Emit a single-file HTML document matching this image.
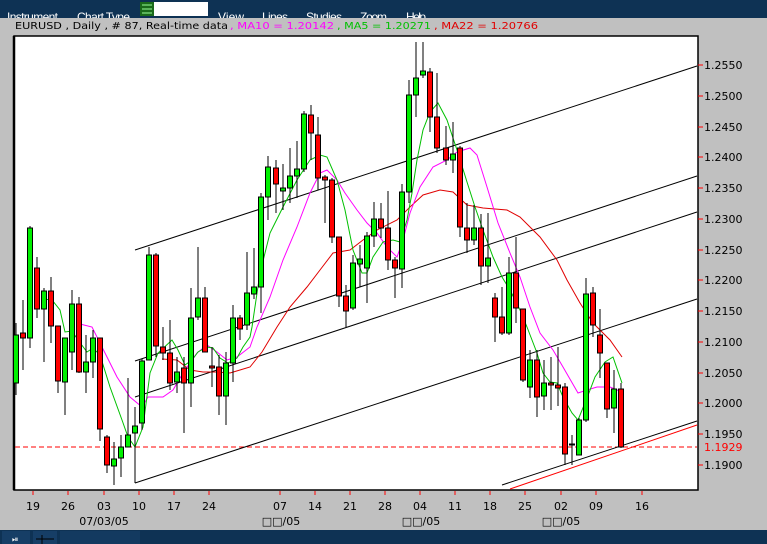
<!DOCTYPE html>
<html><head><meta charset="utf-8"><style>
html,body{margin:0;padding:0;width:767px;height:544px;overflow:hidden;background:#c0c0c0;}
svg{display:block;font-family:"DejaVu Sans","Liberation Sans",sans-serif;}
</style></head><body>
<svg width="767" height="544" viewBox="0 0 767 544" xmlns="http://www.w3.org/2000/svg">
<defs><clipPath id="mc"><rect x="0" y="0" width="767" height="18"/></clipPath></defs>
<rect x="0" y="0" width="767" height="544" fill="#c0c0c0"/>
<rect x="0" y="0" width="767" height="18" fill="#0e3254"/>
<g fill="#ffffff" font-size="12" font-family="Liberation Sans, sans-serif" clip-path="url(#mc)">
<text x="7" y="21" textLength="51">Instrument</text>
<text x="77" y="21" textLength="53">Chart Type</text>
<text x="218" y="21" textLength="26">View</text>
<text x="262" y="21" textLength="26">Lines</text>
<text x="306" y="21" textLength="36">Studies</text>
<text x="360" y="21" textLength="27">Zoom</text>
<text x="406" y="21" textLength="20">Help</text>
</g>
<rect x="140" y="2" width="14" height="14" fill="#1a6a1a"/>
<g stroke="#9f9" stroke-width="1"><line x1="142" y1="5" x2="152" y2="5"/><line x1="142" y1="9" x2="152" y2="9"/><line x1="142" y1="13" x2="152" y2="13"/></g>
<rect x="154" y="2" width="54" height="14" fill="#ffffff"/>
<g font-size="10">
<text x="15" y="29" fill="#000" textLength="213" lengthAdjust="spacingAndGlyphs">EURUSD , Daily , # 87, Real-time data</text>
<text x="230" y="29" fill="#ff00ff" textLength="104" lengthAdjust="spacingAndGlyphs">, MA10 = 1.20142</text>
<text x="337" y="29" fill="#00c000" textLength="94" lengthAdjust="spacingAndGlyphs">, MA5 = 1.20271</text>
<text x="434" y="29" fill="#e00000" textLength="104" lengthAdjust="spacingAndGlyphs">, MA22 = 1.20766</text>
</g>
<rect x="14" y="36" width="684" height="454" fill="#ffffff" stroke="#000" stroke-width="1.5"/>
<line x1="14" y1="36" x2="14" y2="490" stroke="#000" stroke-width="2.5"/>
<g font-size="11" fill="#000">
<text x="704" y="69">1.2550</text>
<text x="704" y="100">1.2500</text>
<text x="704" y="131">1.2450</text>
<text x="704" y="161">1.2400</text>
<text x="704" y="192">1.2350</text>
<text x="704" y="223">1.2300</text>
<text x="704" y="254">1.2250</text>
<text x="704" y="284">1.2200</text>
<text x="704" y="315">1.2150</text>
<text x="704" y="346">1.2100</text>
<text x="704" y="377">1.2050</text>
<text x="704" y="407">1.2000</text>
<text x="704" y="438">1.1950</text>
<text x="704" y="451" fill="#ff0000">1.1929</text>
<text x="704" y="469">1.1900</text>
</g>
<g stroke="#ff0000" stroke-width="1">
<line x1="698" y1="65" x2="703" y2="65"/><line x1="698" y1="96" x2="703" y2="96"/><line x1="698" y1="127" x2="703" y2="127"/><line x1="698" y1="157" x2="703" y2="157"/><line x1="698" y1="188" x2="703" y2="188"/><line x1="698" y1="219" x2="703" y2="219"/><line x1="698" y1="250" x2="703" y2="250"/><line x1="698" y1="280" x2="703" y2="280"/><line x1="698" y1="311" x2="703" y2="311"/><line x1="698" y1="342" x2="703" y2="342"/><line x1="698" y1="373" x2="703" y2="373"/><line x1="698" y1="403" x2="703" y2="403"/><line x1="698" y1="434" x2="703" y2="434"/><line x1="698" y1="465" x2="703" y2="465"/>
</g>
<g stroke="#ff0000" stroke-width="1">
<line x1="33" y1="491" x2="33" y2="495"/><line x1="68" y1="491" x2="68" y2="495"/><line x1="104" y1="491" x2="104" y2="495"/><line x1="139" y1="491" x2="139" y2="495"/><line x1="174" y1="491" x2="174" y2="495"/><line x1="209" y1="491" x2="209" y2="495"/><line x1="280" y1="491" x2="280" y2="495"/><line x1="315" y1="491" x2="315" y2="495"/><line x1="350" y1="491" x2="350" y2="495"/><line x1="385" y1="491" x2="385" y2="495"/><line x1="420" y1="491" x2="420" y2="495"/><line x1="455" y1="491" x2="455" y2="495"/><line x1="490" y1="491" x2="490" y2="495"/><line x1="525" y1="491" x2="525" y2="495"/><line x1="561" y1="491" x2="561" y2="495"/><line x1="596" y1="491" x2="596" y2="495"/><line x1="642" y1="491" x2="642" y2="495"/>
</g>
<g font-size="11" fill="#000" text-anchor="middle">
<text x="33" y="510">19</text><text x="68" y="510">26</text><text x="104" y="510">03</text><text x="139" y="510">10</text><text x="174" y="510">17</text><text x="209" y="510">24</text><text x="280" y="510">07</text><text x="315" y="510">14</text><text x="350" y="510">21</text><text x="385" y="510">28</text><text x="420" y="510">04</text><text x="455" y="510">11</text><text x="490" y="510">18</text><text x="525" y="510">25</text><text x="561" y="510">02</text><text x="596" y="510">09</text><text x="642" y="510">16</text>
<text x="104" y="525">07/03/05</text>
<text x="281" y="525">□□/05</text>
<text x="421" y="525">□□/05</text>
<text x="561" y="525">□□/05</text>
</g>
<rect x="0" y="530" width="767" height="14" fill="#0e3254"/>
<rect x="2" y="531" width="28" height="13" fill="#163e66"/>
<rect x="33" y="531" width="24" height="13" fill="#163e66"/>
<rect x="60" y="531" width="80" height="13" fill="#133a60"/>
<text x="12" y="542" font-size="8" fill="#fff">⏯</text>
<line x1="36" y1="539" x2="54" y2="539" stroke="#000" stroke-width="1"/>
<line x1="42" y1="535" x2="42" y2="544" stroke="#000" stroke-width="1"/>

<line x1="15" y1="447" x2="697" y2="447" stroke="#ff0000" stroke-width="1" stroke-dasharray="5,3"/>
<g stroke="#000" stroke-width="1" fill="none">
<line x1="135" y1="250" x2="697" y2="66"/>
<line x1="135" y1="361" x2="697" y2="176"/>
<line x1="135" y1="397" x2="697" y2="212"/>
<line x1="135" y1="483" x2="697" y2="299"/>
<line x1="502" y1="485" x2="697" y2="421"/>
</g>
<line x1="510" y1="489" x2="697" y2="425" stroke="#ff0000" stroke-width="1"/>

<polyline fill="none" stroke="#e00000" stroke-width="1" points="162,359 177,360 190,370 203,372 217,372 230,373 240,370 250,367 262,352 277,327 290,307 307,287 320,270 333,253 350,250 363,240 377,230 397,220 410,207 423,195 440,190 453,192 467,205 483,208 507,210 520,217 540,237 557,260 567,280 580,303 593,323 610,340 622,357"/>
<polyline fill="none" stroke="#ff00ff" stroke-width="1" points="80,324 92,327 102,347 117,377 130,397 142,407 148,397 163,397 173,390 183,373 197,353 207,345 217,352 227,360 237,357 250,347 257,327 270,297 283,260 297,227 310,193 320,173 327,170 337,180 345,193 357,210 367,223 377,233 387,247 397,257 403,240 410,213 420,187 433,167 447,160 457,152 470,148 477,155 487,187 498,223 510,253 520,277 530,307 540,333 553,350 563,367 578,393 587,390 597,387 610,387 622,392"/>
<polyline fill="none" stroke="#00c000" stroke-width="1" points="43,299 52,300 60,310 65,332 72,331 78,340 87,352 93,348 100,355 110,387 122,420 128,437 135,447 143,427 150,373 158,353 172,340 178,350 185,365 192,360 198,352 207,347 213,348 220,358 228,363 237,358 243,347 250,337 252,327 260,273 270,233 283,207 297,180 310,160 320,155 327,157 337,180 345,210 353,250 362,273 367,273 373,257 383,242 393,240 400,242 407,220 412,193 417,160 423,130 430,112 438,103 447,120 458,153 467,182 475,207 483,230 493,257 502,277 510,290 520,310 527,327 537,353 543,373 550,382 557,383 563,397 572,413 578,420 587,398 595,377 605,362 613,357 622,383"/>

<g stroke="#000" stroke-width="1">
<line x1="16" y1="323" x2="16" y2="395"/><rect x="13.5" y="335" width="5" height="48" fill="#00f000"/>
<line x1="23" y1="300" x2="23" y2="370"/><rect x="20.5" y="333" width="5" height="5" fill="#ff0000"/>
<line x1="30" y1="226" x2="30" y2="348"/><rect x="27.5" y="228" width="5" height="110" fill="#00f000"/>
<line x1="37" y1="257" x2="37" y2="318"/><rect x="34.5" y="268" width="5" height="41" fill="#ff0000"/>
<line x1="44" y1="288" x2="44" y2="362"/><rect x="41.5" y="291" width="5" height="18" fill="#00f000"/>
<line x1="51" y1="277" x2="51" y2="343"/><rect x="48.5" y="291" width="5" height="35" fill="#ff0000"/>
<line x1="58" y1="326" x2="58" y2="393"/><rect x="55.5" y="326" width="5" height="55" fill="#ff0000"/>
<line x1="65" y1="338" x2="65" y2="415"/><rect x="62.5" y="338" width="5" height="44" fill="#00f000"/>
<line x1="72" y1="290" x2="72" y2="370"/><rect x="69.5" y="304" width="5" height="48" fill="#00f000"/>
<line x1="79" y1="297" x2="79" y2="373"/><rect x="76.5" y="304" width="5" height="68" fill="#ff0000"/>
<line x1="86" y1="335" x2="86" y2="393"/><rect x="83.5" y="362" width="5" height="10" fill="#00f000"/>
<line x1="93" y1="330" x2="93" y2="378"/><rect x="90.5" y="338" width="5" height="24" fill="#00f000"/>
<line x1="100" y1="338" x2="100" y2="441"/><rect x="97.5" y="338" width="5" height="91" fill="#ff0000"/>
<line x1="107" y1="435" x2="107" y2="473"/><rect x="104.5" y="437" width="5" height="28" fill="#ff0000"/>
<line x1="114" y1="442" x2="114" y2="485"/><rect x="111.5" y="459" width="5" height="7" fill="#00f000"/>
<line x1="121" y1="435" x2="121" y2="477"/><rect x="118.5" y="447" width="5" height="11" fill="#00f000"/>
<line x1="128" y1="378" x2="128" y2="447"/><rect x="125.5" y="435" width="5" height="12" fill="#00f000"/>
<line x1="135" y1="407" x2="135" y2="483"/><rect x="132.5" y="426" width="5" height="7" fill="#00f000"/>
<line x1="142" y1="359" x2="142" y2="430"/><rect x="139.5" y="361" width="5" height="62" fill="#00f000"/>
<line x1="149" y1="247" x2="149" y2="360"/><rect x="146.5" y="255" width="5" height="105" fill="#00f000"/>
<line x1="156" y1="253" x2="156" y2="357"/><rect x="153.5" y="255" width="5" height="91" fill="#ff0000"/>
<line x1="163" y1="327" x2="163" y2="360"/><rect x="160.5" y="347" width="5" height="6" fill="#ff0000"/>
<line x1="170" y1="320" x2="170" y2="390"/><rect x="167.5" y="353" width="5" height="30" fill="#ff0000"/>
<line x1="177" y1="357" x2="177" y2="393"/><rect x="174.5" y="372" width="5" height="10" fill="#00f000"/>
<line x1="184" y1="357" x2="184" y2="433"/><rect x="181.5" y="368" width="5" height="15" fill="#ff0000"/>
<line x1="191" y1="288" x2="191" y2="407"/><rect x="188.5" y="318" width="5" height="65" fill="#00f000"/>
<line x1="198" y1="247" x2="198" y2="320"/><rect x="195.5" y="298" width="5" height="19" fill="#00f000"/>
<line x1="205" y1="287" x2="205" y2="352"/><rect x="202.5" y="298" width="5" height="54" fill="#ff0000"/>
<line x1="212" y1="347" x2="212" y2="387"/><rect x="209.5" y="366" width="5" height="2" fill="#ff0000"/>
<line x1="219" y1="355" x2="219" y2="415"/><rect x="216.5" y="367" width="5" height="29" fill="#ff0000"/>
<line x1="226" y1="352" x2="226" y2="425"/><rect x="223.5" y="363" width="5" height="33" fill="#00f000"/>
<line x1="233" y1="305" x2="233" y2="382"/><rect x="230.5" y="318" width="5" height="45" fill="#00f000"/>
<line x1="240" y1="315" x2="240" y2="340"/><rect x="237.5" y="318" width="5" height="11" fill="#ff0000"/>
<line x1="247" y1="252" x2="247" y2="330"/><rect x="244.5" y="293" width="5" height="32" fill="#00f000"/>
<line x1="254" y1="248" x2="254" y2="299"/><rect x="251.5" y="287" width="5" height="7" fill="#00f000"/>
<line x1="261" y1="193" x2="261" y2="313"/><rect x="258.5" y="197" width="5" height="90" fill="#00f000"/>
<line x1="268" y1="156" x2="268" y2="220"/><rect x="265.5" y="167" width="5" height="30" fill="#00f000"/>
<line x1="276" y1="160" x2="276" y2="213"/><rect x="273.5" y="168" width="5" height="16" fill="#ff0000"/>
<line x1="283" y1="164" x2="283" y2="210"/><rect x="280.5" y="188" width="5" height="3" fill="#00f000"/>
<line x1="290" y1="148" x2="290" y2="203"/><rect x="287.5" y="176" width="5" height="12" fill="#00f000"/>
<line x1="297" y1="141" x2="297" y2="198"/><rect x="294.5" y="169" width="5" height="7" fill="#00f000"/>
<line x1="304" y1="111" x2="304" y2="172"/><rect x="301.5" y="114" width="5" height="55" fill="#00f000"/>
<line x1="311" y1="105" x2="311" y2="160"/><rect x="308.5" y="115" width="5" height="18" fill="#ff0000"/>
<line x1="318" y1="117" x2="318" y2="190"/><rect x="315.5" y="135" width="5" height="43" fill="#ff0000"/>
<line x1="325" y1="175" x2="325" y2="223"/><rect x="322.5" y="177" width="5" height="3" fill="#ff0000"/>
<line x1="332" y1="178" x2="332" y2="243"/><rect x="329.5" y="180" width="5" height="57" fill="#ff0000"/>
<line x1="339" y1="237" x2="339" y2="307"/><rect x="336.5" y="237" width="5" height="59" fill="#ff0000"/>
<line x1="346" y1="285" x2="346" y2="327"/><rect x="343.5" y="296" width="5" height="15" fill="#ff0000"/>
<line x1="353" y1="255" x2="353" y2="310"/><rect x="350.5" y="263" width="5" height="45" fill="#00f000"/>
<line x1="360" y1="245" x2="360" y2="287"/><rect x="357.5" y="259" width="5" height="5" fill="#00f000"/>
<line x1="367" y1="232" x2="367" y2="303"/><rect x="364.5" y="236" width="5" height="32" fill="#00f000"/>
<line x1="374" y1="202" x2="374" y2="247"/><rect x="371.5" y="219" width="5" height="17" fill="#00f000"/>
<line x1="381" y1="203" x2="381" y2="238"/><rect x="378.5" y="219" width="5" height="9" fill="#ff0000"/>
<line x1="388" y1="191" x2="388" y2="270"/><rect x="385.5" y="228" width="5" height="32" fill="#ff0000"/>
<line x1="395" y1="257" x2="395" y2="298"/><rect x="392.5" y="260" width="5" height="8" fill="#ff0000"/>
<line x1="402" y1="184" x2="402" y2="288"/><rect x="399.5" y="192" width="5" height="77" fill="#00f000"/>
<line x1="409" y1="80" x2="409" y2="203"/><rect x="406.5" y="95" width="5" height="97" fill="#00f000"/>
<line x1="416" y1="42" x2="416" y2="117"/><rect x="413.5" y="78" width="5" height="17" fill="#00f000"/>
<line x1="423" y1="42" x2="423" y2="78"/><rect x="420.5" y="71" width="5" height="4" fill="#00f000"/>
<line x1="430" y1="68" x2="430" y2="132"/><rect x="427.5" y="72" width="5" height="45" fill="#ff0000"/>
<line x1="437" y1="73" x2="437" y2="153"/><rect x="434.5" y="117" width="5" height="31" fill="#ff0000"/>
<line x1="446" y1="126" x2="446" y2="165"/><rect x="443.5" y="148" width="5" height="12" fill="#ff0000"/>
<line x1="453" y1="122" x2="453" y2="173"/><rect x="450.5" y="154" width="5" height="6" fill="#00f000"/>
<line x1="460" y1="146" x2="460" y2="237"/><rect x="457.5" y="148" width="5" height="79" fill="#ff0000"/>
<line x1="467" y1="203" x2="467" y2="253"/><rect x="464.5" y="228" width="5" height="12" fill="#ff0000"/>
<line x1="474" y1="205" x2="474" y2="245"/><rect x="471.5" y="228" width="5" height="12" fill="#00f000"/>
<line x1="481" y1="214" x2="481" y2="285"/><rect x="478.5" y="228" width="5" height="38" fill="#ff0000"/>
<line x1="488" y1="213" x2="488" y2="283"/><rect x="485.5" y="258" width="5" height="8" fill="#00f000"/>
<line x1="495" y1="293" x2="495" y2="342"/><rect x="492.5" y="298" width="5" height="19" fill="#ff0000"/>
<line x1="502" y1="287" x2="502" y2="335"/><rect x="499.5" y="317" width="5" height="16" fill="#ff0000"/>
<line x1="509" y1="257" x2="509" y2="335"/><rect x="506.5" y="273" width="5" height="60" fill="#00f000"/>
<line x1="516" y1="237" x2="516" y2="323"/><rect x="513.5" y="273" width="5" height="35" fill="#ff0000"/>
<line x1="523" y1="309" x2="523" y2="382"/><rect x="520.5" y="309" width="5" height="71" fill="#ff0000"/>
<line x1="530" y1="350" x2="530" y2="398"/><rect x="527.5" y="360" width="5" height="27" fill="#00f000"/>
<line x1="537" y1="350" x2="537" y2="417"/><rect x="534.5" y="360" width="5" height="37" fill="#ff0000"/>
<line x1="544" y1="360" x2="544" y2="410"/><rect x="541.5" y="383" width="5" height="13" fill="#00f000"/>
<line x1="551" y1="357" x2="551" y2="410"/><rect x="548.5" y="383" width="5" height="2" fill="#ff0000"/>
<line x1="558" y1="347" x2="558" y2="406"/><rect x="555.5" y="385" width="5" height="3" fill="#ff0000"/>
<line x1="565" y1="383" x2="565" y2="465"/><rect x="562.5" y="387" width="5" height="67" fill="#ff0000"/>
<line x1="572" y1="435" x2="572" y2="465"/><rect x="569.5" y="444" width="5" height="1" fill="#00f000"/>
<line x1="579" y1="418" x2="579" y2="455"/><rect x="576.5" y="420" width="5" height="35" fill="#00f000"/>
<line x1="586" y1="278" x2="586" y2="422"/><rect x="583.5" y="294" width="5" height="126" fill="#00f000"/>
<line x1="593" y1="287" x2="593" y2="337"/><rect x="590.5" y="293" width="5" height="32" fill="#ff0000"/>
<line x1="600" y1="309" x2="600" y2="378"/><rect x="597.5" y="335" width="5" height="18" fill="#ff0000"/>
<line x1="607" y1="363" x2="607" y2="418"/><rect x="604.5" y="363" width="5" height="46" fill="#ff0000"/>
<line x1="614" y1="370" x2="614" y2="433"/><rect x="611.5" y="389" width="5" height="19" fill="#00f000"/>
<line x1="621" y1="383" x2="621" y2="448"/><rect x="618.5" y="389" width="5" height="58" fill="#ff0000"/>
</g>
</svg>
</body></html>
